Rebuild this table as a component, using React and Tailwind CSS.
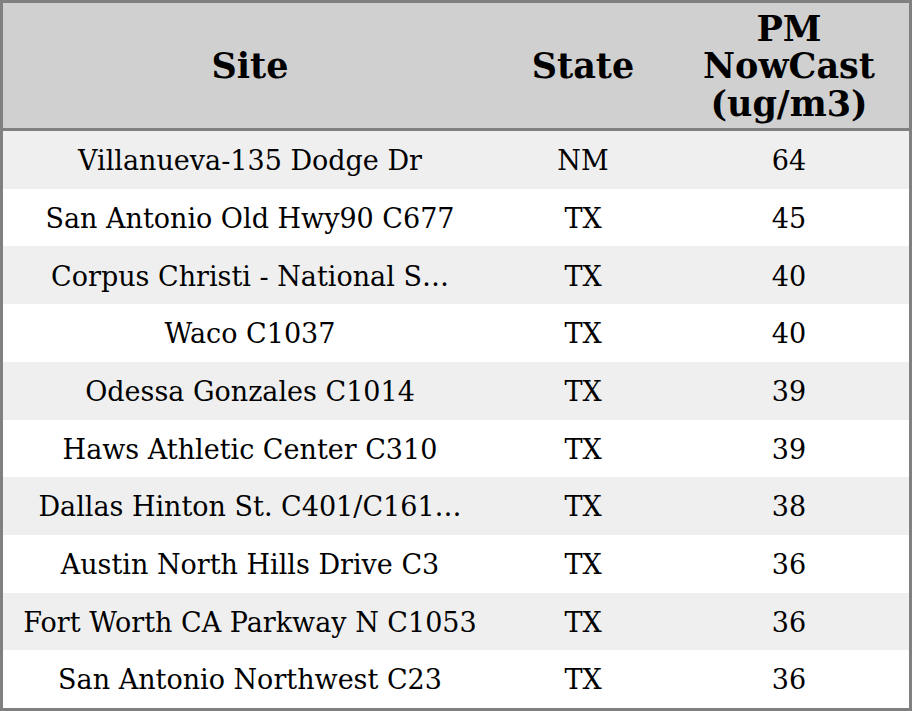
export default function App() {
  const rows = [
    ["Villanueva-135 Dodge Dr", "NM", "64"],
    ["San Antonio Old Hwy90 C677", "TX", "45"],
    ["Corpus Christi - National S…", "TX", "40"],
    ["Waco C1037", "TX", "40"],
    ["Odessa Gonzales C1014", "TX", "39"],
    ["Haws Athletic Center C310", "TX", "39"],
    ["Dallas Hinton St. C401/C161…", "TX", "38"],
    ["Austin North Hills Drive C3", "TX", "36"],
    ["Fort Worth CA Parkway N C1053", "TX", "36"],
    ["San Antonio Northwest C23", "TX", "36"],
  ];
  return (
    <div
      className="w-[912px] h-[711px] border-[3px] border-[#808080] flex flex-col text-black bg-white"
      style={{ fontFamily: '"DejaVu Serif", serif' }}
    >
      <div className="h-[128px] shrink-0 flex border-b-[3px] border-[#808080] bg-[#d0d0d0] text-[35px] font-bold leading-[37.5px] pt-[1px]">
        <div className="w-[494px] flex items-center justify-center text-center">Site</div>
        <div className="w-[172px] flex items-center justify-center text-center">State</div>
        <div className="flex-1 flex items-center justify-center text-center">
          PM
          <br />
          NowCast
          <br />
          (ug/m3)
        </div>
      </div>
      {rows.map((r, i) => (
        <div
          key={i}
          className={`flex-1 flex items-center pt-[3px] text-[27px] ${i % 2 === 0 ? "bg-[#efefef]" : "bg-white"}`}
        >
          <div className="w-[494px] text-center whitespace-nowrap">{r[0]}</div>
          <div className="w-[172px] text-center">{r[1]}</div>
          <div className="flex-1 text-center">{r[2]}</div>
        </div>
      ))}
    </div>
  );
}
